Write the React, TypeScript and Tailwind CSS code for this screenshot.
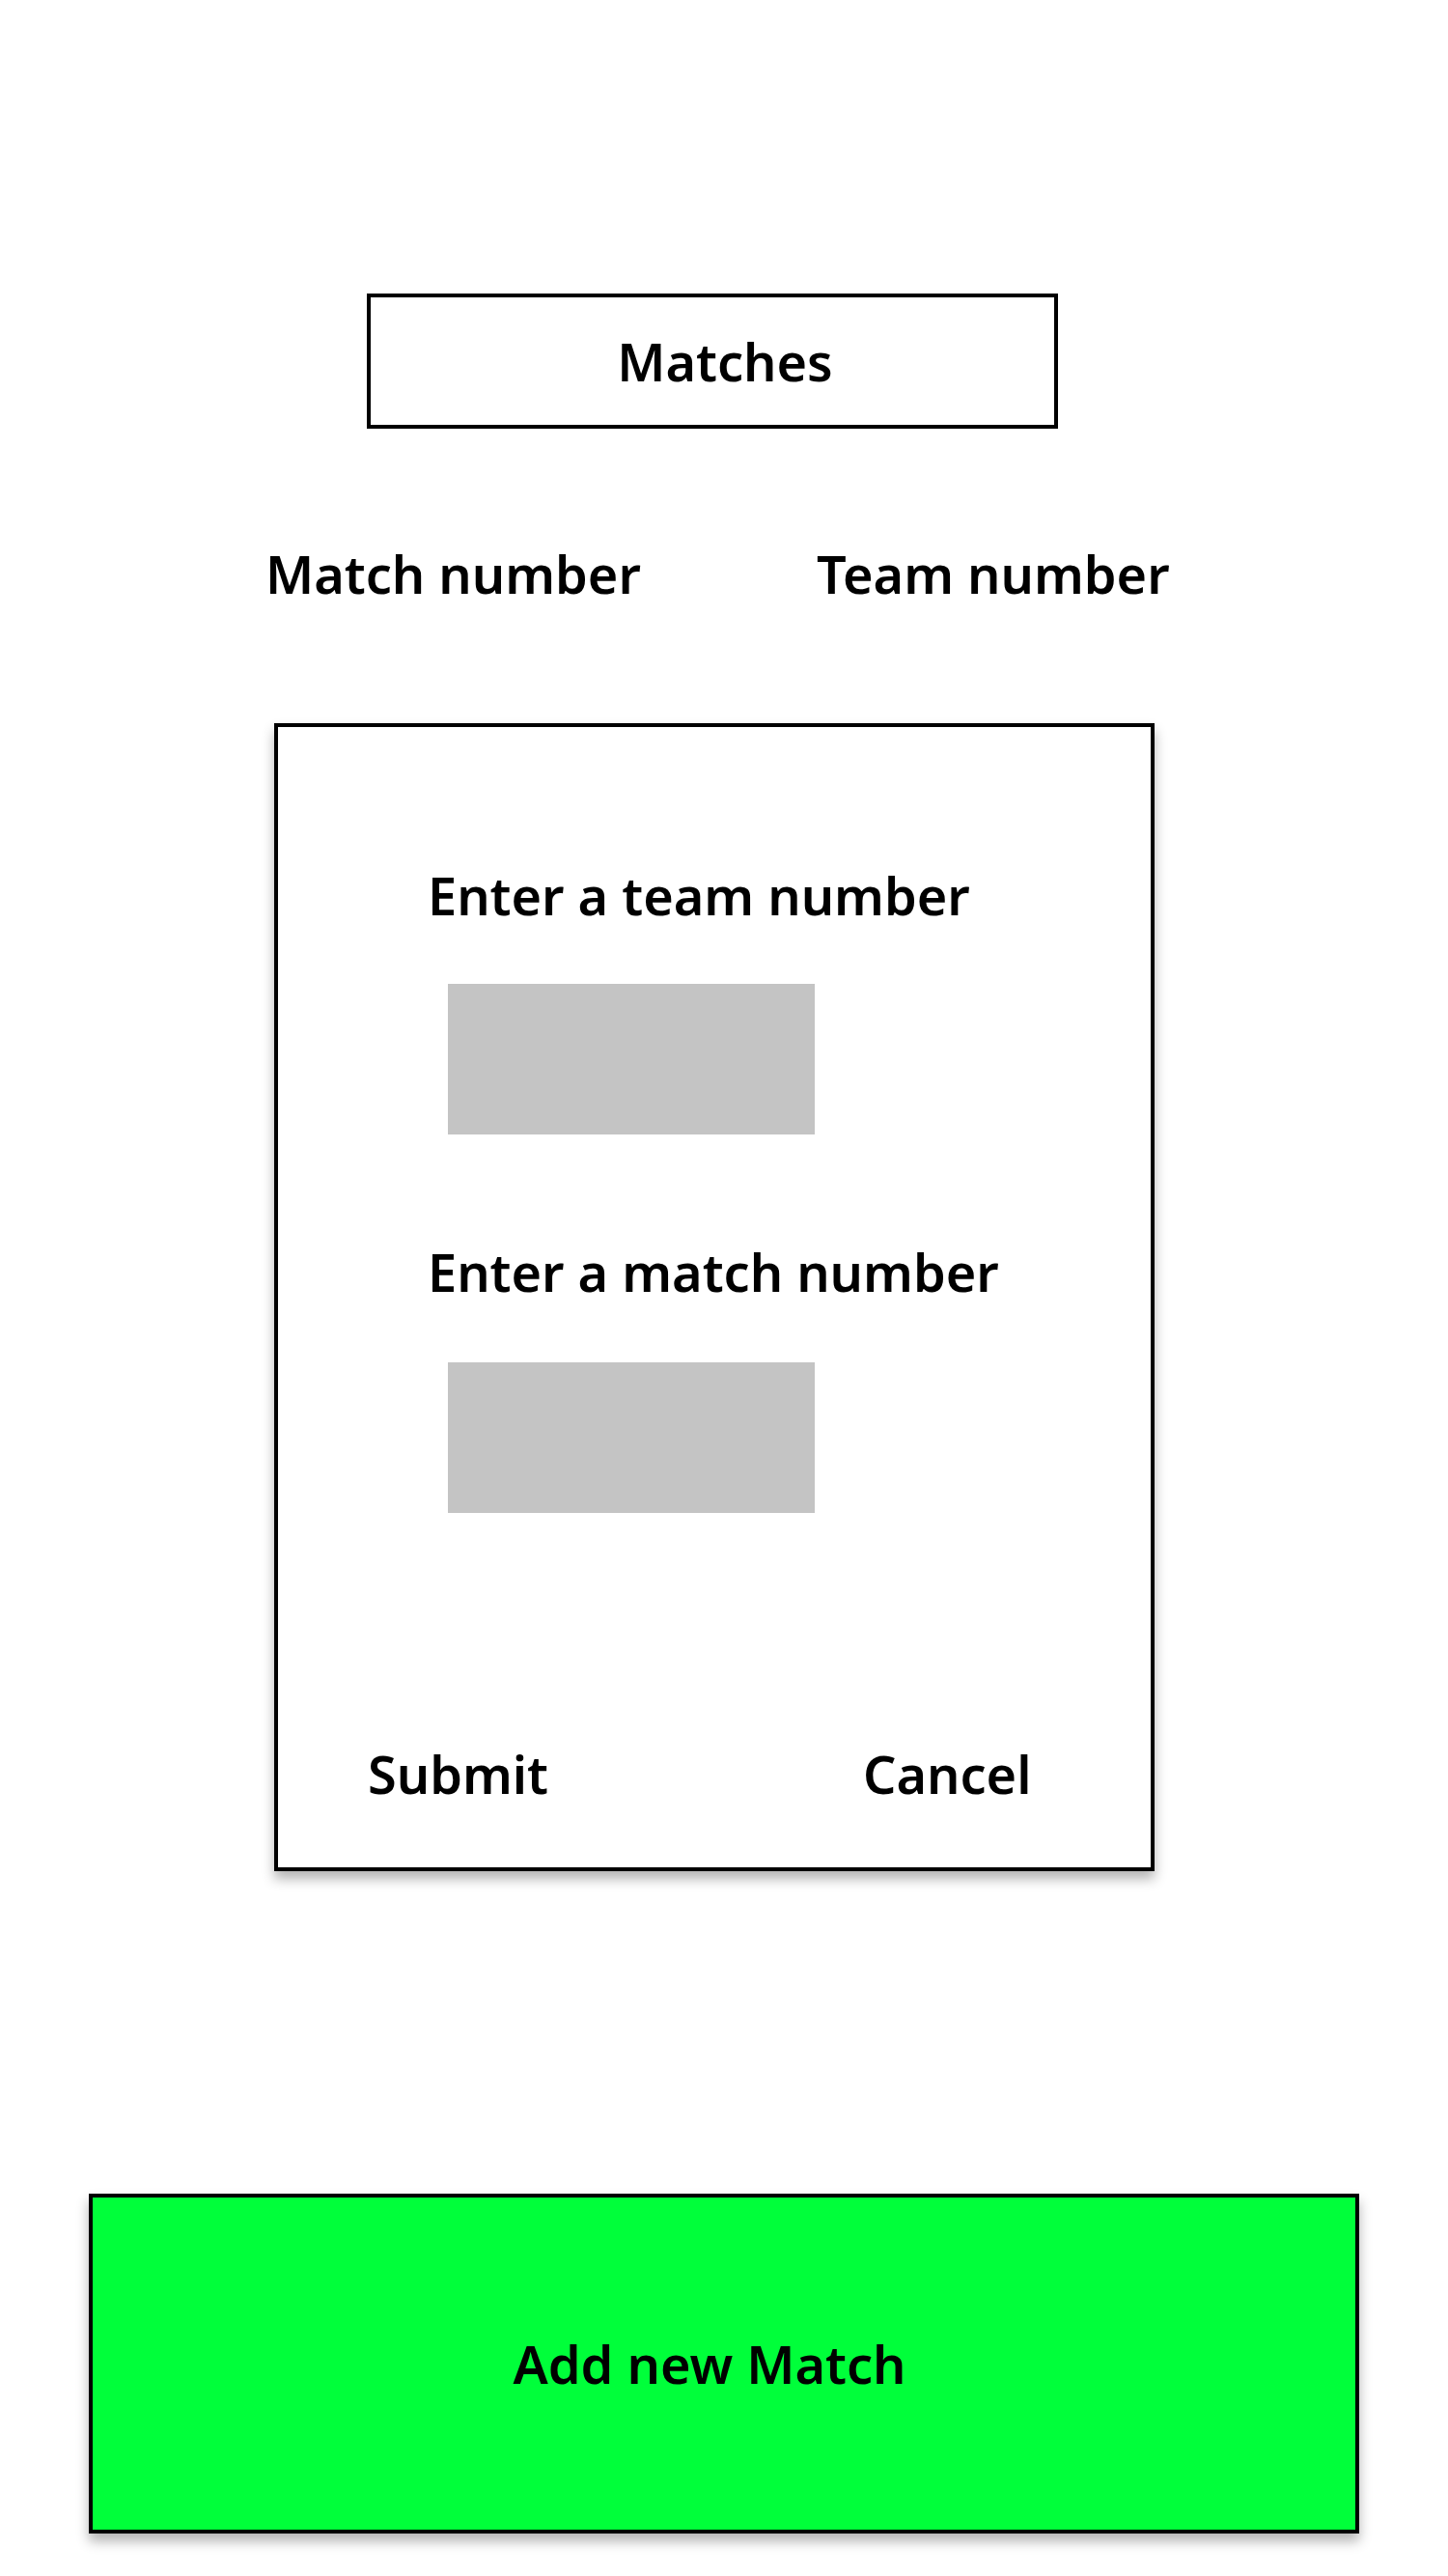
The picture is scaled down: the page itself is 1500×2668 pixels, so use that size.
import React from 'react';

const font = { fontFamily: '"Noto Sans", "Liberation Sans", sans-serif' };

const FieldLabel: React.FC<{ text: string; className?: string }> = ({ text, className }) => (
  <div className={`pl-[155px] text-[54px] leading-none font-semibold text-black ${className ?? ''}`}>{text}</div>
);

const GreyInput: React.FC<{ className?: string }> = ({ className }) => (
  <div className={`ml-[176px] w-[380px] h-[156px] bg-[#c4c4c4] ${className ?? ''}`} />
);

const App: React.FC = () => {
  return (
    <div className="w-[1500px] h-[2668px] bg-white flex flex-col text-black" style={font}>
      <div className="pt-[304px] pl-[380px]">
        <div className="w-[716px] h-[140px] border-4 border-black flex items-center justify-center text-[54px] leading-none font-semibold">
          <span className="pl-[26px]">Matches</span>
        </div>
      </div>

      <div className="mt-[123px] flex text-[54px] leading-none font-semibold">
        <div className="ml-[275px] w-[571px]">Match number</div>
        <div>Team number</div>
      </div>

      <div className="mt-[128px] ml-[284px] w-[912px] h-[1189px] border-4 border-black bg-white shadow-[0_8px_12px_rgba(0,0,0,0.3)] flex flex-col">
        <FieldLabel text="Enter a team number" className="mt-[147px]" />
        <GreyInput className="mt-[65px]" />
        <FieldLabel text="Enter a match number" className="mt-[115px]" />
        <GreyInput className="mt-[67px]" />
        <div className="mt-[243px] flex text-[54px] leading-none font-semibold">
          <div className="ml-[93px] w-[513px]">Submit</div>
          <div>Cancel</div>
        </div>
      </div>

      <div className="mt-[334px] ml-[92px] w-[1316px] h-[352px] border-4 border-black bg-[#00ff3a] shadow-[0_8px_12px_rgba(0,0,0,0.3)] flex items-center justify-center">
        <span className="pr-[30px] text-[54px] leading-none font-semibold">Add new Match</span>
      </div>
    </div>
  );
};

export default App;
